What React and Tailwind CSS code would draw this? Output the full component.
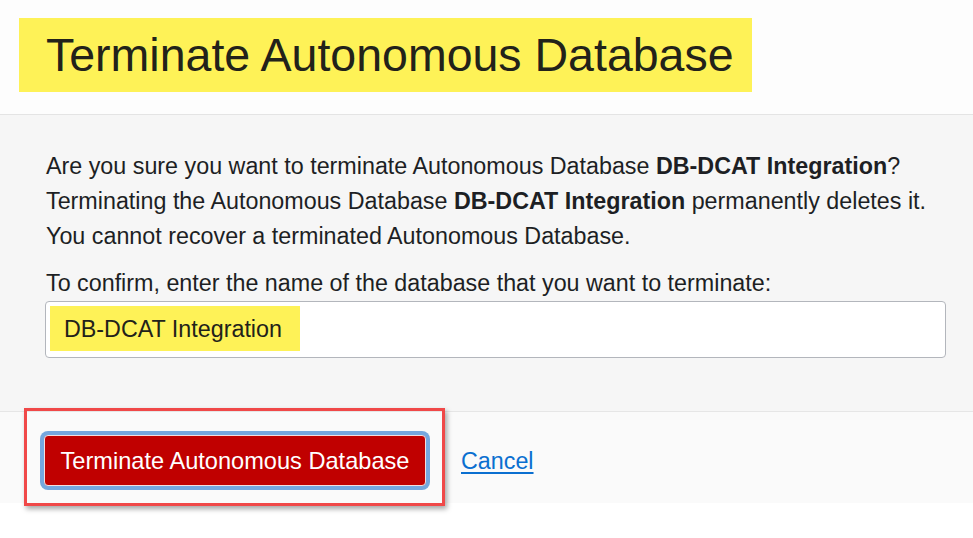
import React from "react";

export default function App() {
  return (
    <div className="relative w-[973px] h-[538px] bg-white text-[#1d1f24]" style={{ fontFamily: '"Liberation Sans", Arial, sans-serif' }}>
      <div className="h-[115px] bg-[#fdfdfd] border-b border-[#e4e4e4] pt-[18px] pl-[19px]">
        <div className="h-[74px] w-[733px] bg-[#fef257] pl-[27px] text-[46.5px] leading-[74px] text-[#22221a] whitespace-nowrap">
          Terminate Autonomous Database
        </div>
      </div>
      <div className="bg-[#f6f6f6] border-b border-[#e6e6e6] pl-[45px] pr-[26px] pt-[34px] pb-[53px]">
        <div className="pl-[1px] text-[23.3px] leading-[35px]">
          <p>
            Are you sure you want to terminate Autonomous Database <b>DB-DCAT Integration</b>?
          </p>
          <p>
            Terminating the Autonomous Database <b>DB-DCAT Integration</b> permanently deletes it.
          </p>
          <p>You cannot recover a terminated Autonomous Database.</p>
          <p className="mt-[12px]">To confirm, enter the name of the database that you want to terminate:</p>
        </div>
        <div className="h-[57px] w-[901px] rounded-[4px] border border-[#b3b6bc] bg-white p-[4px]">
          <div className="h-[45px] w-[250px] bg-[#fef257] pl-[14px] text-[23.3px] leading-[47px] text-[#22221a]">
            DB-DCAT Integration
          </div>
        </div>
      </div>
      <div className="h-[91px] bg-[#fafafa] pl-[40px] pt-[19px] flex items-start gap-[31px]">
        <div className="rounded-[8px] bg-[#75a7de] p-[4px]">
          <button className="h-[51px] w-[382px] rounded-[4px] border border-[#f4dede] bg-[#c00000] text-[23.6px] leading-[51px] text-white">
            Terminate Autonomous Database
          </button>
        </div>
        <a href="#" className="mt-[15px] text-[23.3px] leading-[30px] text-[#0a6fd0] underline underline-offset-[3px]">
          Cancel
        </a>
      </div>
      <div className="absolute left-[24px] top-[408px] h-[98px] w-[421px] border-[3px] border-[#f04848] shadow-[2px_3px_5px_rgba(0,0,0,0.35)]"></div>
    </div>
  );
}
